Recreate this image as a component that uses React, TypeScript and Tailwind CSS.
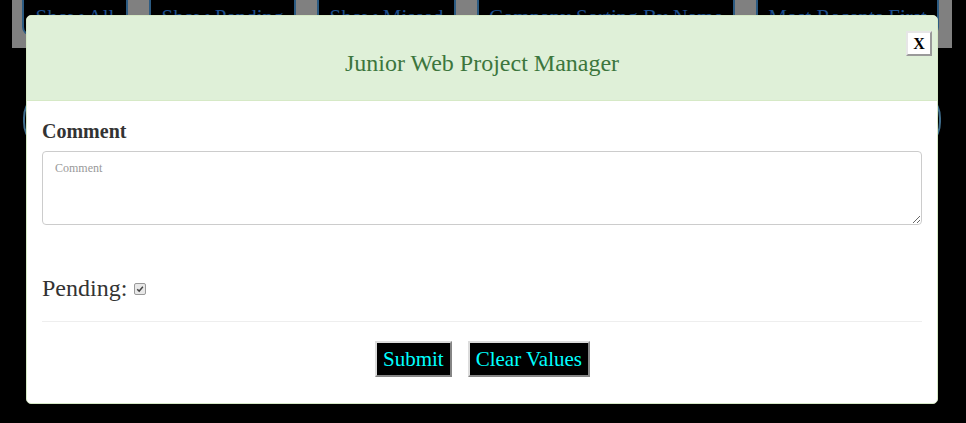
import React from "react";

const filters = [
  { id: "all", title: "Show All", w: "w-[106px]" },
  { id: "pending", title: "Show Pending", w: "w-[147px]" },
  { id: "missed", title: "Show Missed", w: "w-[139px]" },
  { id: "company", title: "Company Sorting By Name", w: "w-[258px]" },
  { id: "recent", title: "Most Recents First", w: "w-[183px]" },
];

const App: React.FC = () => {
  return (
    <div
      className="relative w-[966px] h-[423px] bg-black overflow-hidden"
      style={{ fontFamily: '"Liberation Serif", "Times New Roman", serif' }}
    >
      {/* filter bar */}
      <div className="ml-[12px] w-[940px] h-[48px] bg-[#808080] flex gap-[21px] pl-[10px]">
        {filters.map((f) => (
          <button
            key={f.id}
            className={`${f.w} h-[46px] -mt-[10px] bg-black border-2 border-[#2c5b82] rounded-[9px] text-[#1d4d8c] text-[21px] leading-none pt-[8px]`}
          >
            {f.title}
          </button>
        ))}
      </div>

      {/* search-ish box behind modal */}
      <div className="ml-[23px] mt-[40px] w-[918px] h-[64px] rounded-[30px] border-2 border-[#3f6d8d]" />

      {/* modal */}
      <div className="absolute left-[26px] top-[15px] w-[912px] h-[389px] bg-white rounded-[5px] border border-[#d6e9c6] overflow-hidden flex flex-col">
        <div className="relative h-[85px] shrink-0 bg-[#dff0d8] border-b border-[#d6e9c6] flex items-center justify-center">
          <h2 className="text-[24px] text-[#3c763d] leading-none mt-[10px]">
            Junior Web Project Manager
          </h2>
          <button className="absolute top-[15px] right-[5px] w-[26px] h-[25px] bg-white border-2 border-t-[#e6e6e6] border-l-[#e6e6e6] border-b-[#9a9a9a] border-r-[#9a9a9a] text-[16px] font-bold text-black leading-none flex items-center justify-center">
            X
          </button>
        </div>

        <div className="px-[15px] flex flex-col">
          <label className="mt-[20px] text-[20px] font-bold text-[#333] leading-none">
            Comment
          </label>
          <textarea
            placeholder="Comment"
            className="mt-[10px] w-[880px] h-[74px] border border-[#ccc] rounded-[4px] px-[12px] py-[7px] text-[12px] text-[#555] placeholder:text-[#999] outline-none"
          />
          <div className="mt-[51px] flex items-center gap-[7px] text-[24px] text-[#333] leading-none">
            <span>Pending:</span>
            <span className="w-[12px] h-[12px] mt-[2px] border border-[#999] rounded-[2px] bg-[#e8e8e8] flex items-center justify-center">
              <svg viewBox="0 0 10 10" className="w-[8px] h-[8px]">
                <path d="M1.5 5.2 L4 7.6 L8.6 2.2" fill="none" stroke="#444" strokeWidth="1.8" />
              </svg>
            </span>
          </div>
          <div className="mt-[21px] h-px bg-[#eee]" />
          <div className="mt-[19px] flex justify-center gap-[16px] pl-[1px]">
            <button className="h-[36px] px-[6px] bg-black text-[#00ffff] text-[21px] leading-none border-2 border-t-[#dcdcdc] border-l-[#dcdcdc] border-b-[#858585] border-r-[#858585]">
              Submit
            </button>
            <button className="h-[36px] px-[6px] bg-black text-[#00ffff] text-[21px] leading-none border-2 border-t-[#dcdcdc] border-l-[#dcdcdc] border-b-[#858585] border-r-[#858585]">
              Clear Values
            </button>
          </div>
        </div>
      </div>
    </div>
  );
};

export default App;
